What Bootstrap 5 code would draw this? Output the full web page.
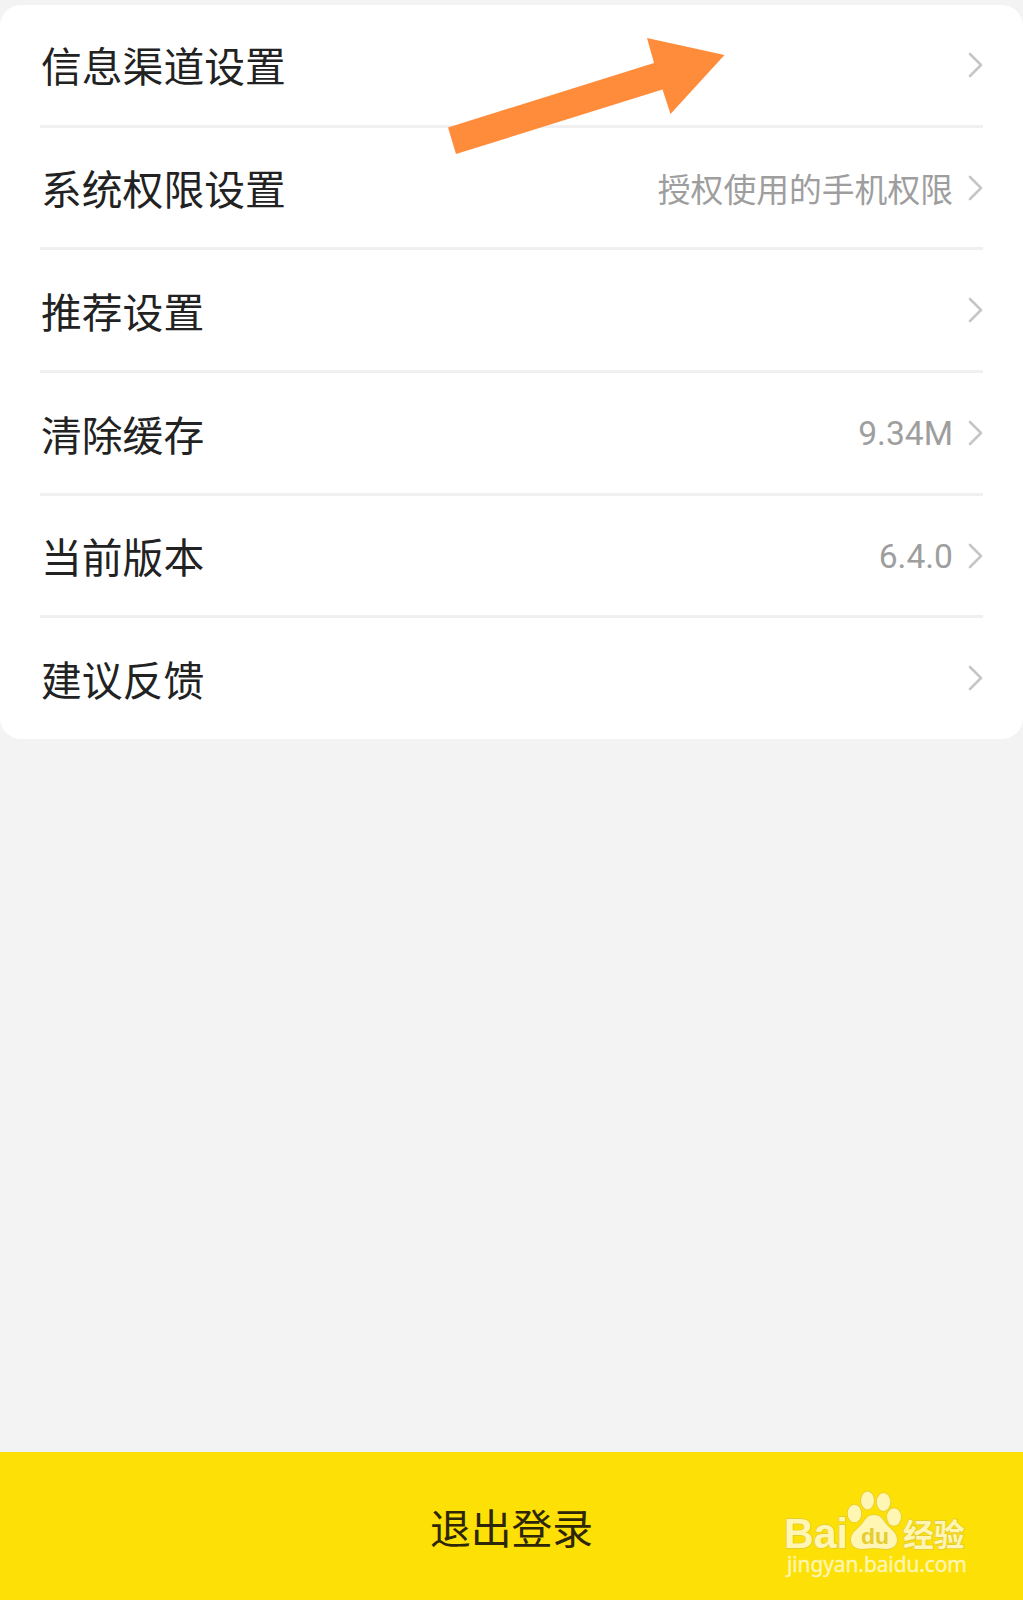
<!DOCTYPE html>
<html lang="zh-CN">
<head>
<meta charset="utf-8">
<meta name="viewport" content="width=device-width, initial-scale=1">
<title>设置</title>
<link href="https://cdn.jsdelivr.net/npm/bootstrap@5.3.0/dist/css/bootstrap.min.css" rel="stylesheet">
<style>
  body { background: #f3f3f3; font-family: "Noto Sans CJK SC", sans-serif; color: #222; padding-top: 5px; }
  .settings { border-radius: 21px; padding: 0 40px; height: 734px; }
  .settings .list-group-item { height: 122.7px; padding: 0; border: 0; border-bottom: 3px solid #f0f0f0; color: #222; font-size: 40.8px; line-height: 1; }
  .settings .list-group-item:last-child { border-bottom: 0; height: 120px; }
  .item-label { padding: 2px 0 0 1px; }
  .item-value { font-size: 32.8px; color: #9e9e9e; margin-right: 15px; padding-top: 1px; }
  .item-number { font-family: Roboto, sans-serif; font-size: 33.6px; padding-top: 2px; }
  .chevron { width: 15px; height: 26px; fill: none; stroke: #c6c6c6; stroke-width: 2.6; stroke-linecap: round; stroke-linejoin: round; }
  .arrow { left: 448px; top: 37px; width: 278px; height: 118px; fill: #ff8c3a; z-index: 2; }
  .logout { height: 148px; background: #fde005; color: #2d2708; font-size: 40.8px; line-height: 1; padding-top: 2px; }
  .watermark { right: 43px; bottom: 15px; width: 200px; height: 100px; fill: #fff6b4; }
  .watermark .outlined { stroke: #e5cb35; stroke-width: 1.6; paint-order: stroke; }
</style>
<script src="https://cdn.jsdelivr.net/npm/bootstrap@5.3.0/dist/js/bootstrap.bundle.min.js"></script>
</head>
<body class="min-vh-100 d-flex flex-column position-relative">
<svg width="0" height="0" class="position-absolute"><symbol id="chev" viewBox="0 0 15 26"><path d="M2 2 13 13 2 24"/></symbol></svg>
<main class="settings bg-white">
  <div class="list-group list-group-flush">
    <a class="list-group-item d-flex align-items-center"><span class="item-label me-auto">信息渠道设置</span><svg class="chevron"><use href="#chev"/></svg></a>
    <a class="list-group-item d-flex align-items-center"><span class="item-label me-auto">系统权限设置</span><span class="item-value">授权使用的手机权限</span><svg class="chevron"><use href="#chev"/></svg></a>
    <a class="list-group-item d-flex align-items-center"><span class="item-label me-auto">推荐设置</span><svg class="chevron"><use href="#chev"/></svg></a>
    <a class="list-group-item d-flex align-items-center"><span class="item-label me-auto">清除缓存</span><span class="item-value item-number">9.34M</span><svg class="chevron"><use href="#chev"/></svg></a>
    <a class="list-group-item d-flex align-items-center"><span class="item-label me-auto">当前版本</span><span class="item-value item-number">6.4.0</span><svg class="chevron"><use href="#chev"/></svg></a>
    <a class="list-group-item d-flex align-items-center"><span class="item-label me-auto">建议反馈</span><svg class="chevron"><use href="#chev"/></svg></a>
  </div>
</main>
<svg class="arrow position-absolute" viewBox="448 37 278 118"><path d="M448 127.500 654 63 647 38 724.500 55 670.500 114 662.500 89.500 456 154Z"/></svg>
<footer class="logout mt-auto d-flex align-items-center justify-content-center position-relative">
  <span>退出登录</span>
  <svg class="watermark position-absolute" viewBox="20 15 200 100">
    <g class="outlined">
      <text x="24" y="77.500" font-family="Liberation Sans, sans-serif" font-weight="700" font-size="43" textLength="64" lengthAdjust="spacingAndGlyphs">Bai</text>
      <ellipse cx="94.500" cy="43.500" rx="6.800" ry="8.800"/>
      <ellipse cx="107.500" cy="30.500" rx="6.500" ry="9"/>
      <ellipse cx="123.500" cy="32" rx="6.800" ry="9"/>
      <ellipse cx="134" cy="47" rx="7" ry="8.800"/>
      <path d="M114 45c-7 0-9 5-12 9-4 5-11 8-11 16 0 6 5 9 11 9 4 0 8-1 12-1s8 1 12 1c7 0 11-4 11-9 0-8-7-11-11-16-3-4-5-9-12-9Z"/>
      <text x="143" y="75.500" font-family="Noto Sans CJK SC, sans-serif" font-weight="700" font-size="31" textLength="61.500" lengthAdjust="spacingAndGlyphs">经验</text>
    </g>
    <text x="101" y="73.500" fill="#e6cc2e" font-family="Liberation Sans, sans-serif" font-weight="700" font-size="22" textLength="28" lengthAdjust="spacingAndGlyphs">du</text>
    <text x="27" y="101.500" font-family="Noto Sans, sans-serif" font-size="21" stroke="#fff6b4" stroke-width=".4" textLength="180" lengthAdjust="spacing">jingyan.baidu.com</text>
  </svg>
</footer>
</body>
</html>
